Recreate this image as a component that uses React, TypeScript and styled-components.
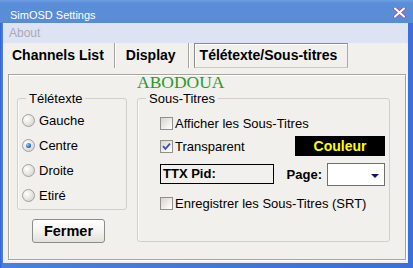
import React from "react";
import styled, { createGlobalStyle } from "styled-components";

const Global = createGlobalStyle`
  html, body { margin: 0; padding: 0; background: #fff; }
  body { font-family: "Liberation Sans", Arial, sans-serif; }
  * { box-sizing: border-box; }
`;

const Window = styled.div`
  width: 413px;
  height: 268px;
  display: flex;
  flex-direction: column;
  background: linear-gradient(90deg, #2f5fcf, #4a7ee0 2px, #3b6fd9);
`;

const TitleBar = styled.div`
  height: 23px;
  flex: none;
  display: flex;
  align-items: flex-end;
  justify-content: space-between;
  padding: 0 7px 1px 10px;
  background: linear-gradient(#6f9fe4, #5b8ed8 3px, #5a8cd6);
  color: #fff;
  font-size: 11px;
  line-height: 13px;
`;

const CloseIcon = styled.svg`
  width: 13px;
  height: 11px;
  margin-bottom: 4px;
`;

const Client = styled.div`
  flex: 1;
  margin: 0 5px 5px 3px;
  display: flex;
  flex-direction: column;
  background: #f1f0ec;
`;

const MenuBar = styled.div`
  height: 20px;
  flex: none;
  display: flex;
  align-items: center;
  padding-left: 6px;
  background: #dee3f4;
  color: #a9a9b8;
  font-size: 12px;
  line-height: 14px;
`;

const TabRow = styled.div`
  height: 25px;
  flex: none;
  display: flex;
  align-items: stretch;
  padding-left: 9px;
`;

const Tab = styled.div<{ $active?: boolean; $pl: number; $pr: number }>`
  font-size: 14px;
  font-weight: bold;
  color: #000;
  white-space: nowrap;
  padding: 0 ${(p) => p.$pr}px 0 ${(p) => p.$pl}px;
  line-height: ${(p) => (p.$active ? 23 : 25)}px;
  ${(p) =>
    p.$active &&
    `
    margin-left: 4px;
    border: 1px solid;
    border-color: #8a8a8a #a9a9a9 #c9c8c2 #8a8a8a;
    box-shadow: inset 1px 1px 0 #fff;
  `}
`;

const TabSep = styled.div`
  width: 2px;
  border-left: 1px solid #a4a3a0;
  border-right: 1px solid #fff;
`;

const Frame = styled.div`
  flex: 1;
  margin: 6px 2px 3px 5px;
  border: 1px solid #a6a5a0;
  box-shadow: 1px 1px 0 #fff, inset 1px 1px 0 #fff;
  display: flex;
  flex-direction: column;
`;

const Banner = styled.div`
  padding-left: 128px;
  font-family: "Liberation Serif", "Times New Roman", serif;
  font-size: 17.5px;
  line-height: 14px;
  height: 14px;
  color: #2b9a2b;
`;

const Panels = styled.div`
  display: flex;
  gap: 10px;
  padding-left: 8px;
  margin-top: 2px;
  align-items: flex-start;
`;

const LeftCol = styled.div`
  width: 110px;
  display: flex;
  flex-direction: column;
  align-items: flex-start;
`;

const GroupBox = styled.fieldset<{ $w: number; $h?: number }>`
  margin: 0;
  padding: 0;
  min-width: 0;
  width: ${(p) => p.$w}px;
  ${(p) => (p.$h ? `height: ${p.$h}px;` : "")}
  border: 1px solid #d0cfc8;
  border-radius: 3px;
  box-shadow: inset 1px 0 0 #fbfbf9;
`;

const Legend = styled.legend`
  margin-left: 8px;
  padding: 0 3px;
  font-size: 13px;
  line-height: 15px;
  color: #000;
`;

const GroupBody = styled.div<{ $pad: string }>`
  padding: ${(p) => p.$pad};
  display: flex;
  flex-direction: column;
`;

const RadioRow = styled.div`
  height: 25px;
  display: flex;
  align-items: center;
  gap: 4px;
  font-size: 13px;
  color: #000;
`;

const RadioCircle = styled.span<{ $on?: boolean }>`
  width: 13px;
  height: 13px;
  border-radius: 50%;
  border: 1px solid #a2a29c;
  background: radial-gradient(circle at 35% 35%, #ffffff, #dcdcd6 70%, #c8c8c2);
  display: flex;
  align-items: center;
  justify-content: center;
  flex: none;
  &::after {
    content: "";
    display: ${(p) => (p.$on ? "block" : "none")};
    width: 5px;
    height: 5px;
    border-radius: 50%;
    background: radial-gradient(circle at 35% 35%, #8fd0ff, #1c6fc2 60%, #0b4a90);
  }
`;

const CheckRow = styled.div<{ $mt?: number }>`
  height: 24px;
  margin-top: ${(p) => p.$mt ?? 0}px;
  display: flex;
  align-items: center;
  gap: 2px;
  font-size: 13px;
  color: #000;
`;

const CheckBox = styled.span`
  width: 13px;
  height: 13px;
  flex: none;
  border: 1px solid #8f908c;
  background: linear-gradient(135deg, #d6d6cf, #f4f4f0 70%, #ffffff);
  display: flex;
  align-items: center;
  justify-content: center;
`;

const ColorRow = styled.div`
  height: 20px;
  margin-top: 1px;
  display: flex;
  align-items: center;
  justify-content: space-between;
`;

const CheckInline = styled.div`
  display: flex;
  align-items: center;
  gap: 2px;
  font-size: 13px;
  color: #000;
`;

const ColorButton = styled.div`
  width: 90px;
  height: 20px;
  background: #000;
  color: #ffff00;
  font-size: 14px;
  font-weight: bold;
  display: flex;
  align-items: center;
  justify-content: center;
`;

const PidRow = styled.div`
  height: 24px;
  margin-top: 6px;
  display: flex;
  align-items: center;
`;

const PidBox = styled.div`
  width: 114px;
  height: 20px;
  border: 1px solid #000;
  padding-left: 2px;
  font-size: 13px;
  font-weight: bold;
  line-height: 18px;
  color: #000;
`;

const BoldLabel = styled.span`
  margin-left: auto;
  font-size: 13px;
  font-weight: bold;
  color: #000;
`;

const Dropdown = styled.div`
  width: 58px;
  height: 23px;
  margin-left: 5px;
  background: #fff;
  border: 1px solid #6f6f6f;
  display: flex;
  justify-content: flex-end;
  align-items: center;
  padding: 3px 5px 0 0;
`;

const Arrow = styled.span`
  width: 0;
  height: 0;
  border-left: 4px solid transparent;
  border-right: 4px solid transparent;
  border-top: 4px solid #10107a;
`;

const Button = styled.div`
  margin: 9px 0 0 15px;
  width: 73px;
  height: 24px;
  border: 1px solid #8c8c88;
  border-radius: 3px;
  background: linear-gradient(#ffffff, #f4f4f0 50%, #e2e1da);
  display: flex;
  align-items: center;
  justify-content: center;
  font-size: 14.5px;
  font-weight: bold;
  color: #000;
`;

const Check = ({ checked }: { checked?: boolean }) => (
  <CheckBox>
    {checked && (
      <svg width="9" height="9" viewBox="0 0 9 9">
        <path d="M1 4.2 L3.4 6.8 L8 1.6" fill="none" stroke="#3b4fb8" strokeWidth="1.8" />
      </svg>
    )}
  </CheckBox>
);

export default function App() {
  return (
    <>
      <Global />
      <Window>
        <TitleBar>
          <span>SimOSD Settings</span>
          <CloseIcon viewBox="0 0 13 11">
            <path d="M2 1.5 L11 9.5 M11 1.5 L2 9.5" stroke="#c040b0" strokeWidth="3.6" strokeLinecap="round" />
            <path d="M2 1.5 L11 9.5 M11 1.5 L2 9.5" stroke="#ffffff" strokeWidth="2" strokeLinecap="round" />
          </CloseIcon>
        </TitleBar>
        <Client>
          <MenuBar>About</MenuBar>
          <TabRow>
            <Tab $pl={0} $pr={10}>Channels List</Tab>
            <TabSep />
            <Tab $pl={10} $pr={12}>Display</Tab>
            <TabSep />
            <Tab $active $pl={5} $pr={10}>Télétexte/Sous-titres</Tab>
          </TabRow>
          <Frame>
            <Banner>ABODOUA</Banner>
            <Panels>
              <LeftCol>
                <GroupBox $w={110}>
                  <Legend>Télétexte</Legend>
                  <GroupBody $pad="2px 0 1px 4px">
                    <RadioRow><RadioCircle />Gauche</RadioRow>
                    <RadioRow><RadioCircle $on />Centre</RadioRow>
                    <RadioRow><RadioCircle />Droite</RadioRow>
                    <RadioRow><RadioCircle />Etiré</RadioRow>
                  </GroupBody>
                </GroupBox>
                <Button>Fermer</Button>
              </LeftCol>
              <GroupBox $w={253} $h={151}>
                <Legend>Sous-Titres</Legend>
                <GroupBody $pad="5px 4px 0 22px">
                  <CheckRow>
                    <Check />
                    Afficher les Sous-Titres
                  </CheckRow>
                  <ColorRow>
                    <CheckInline>
                      <Check checked />
                      Transparent
                    </CheckInline>
                    <ColorButton>Couleur</ColorButton>
                  </ColorRow>
                  <PidRow>
                    <PidBox>TTX Pid:</PidBox>
                    <BoldLabel>Page:</BoldLabel>
                    <Dropdown>
                      <Arrow />
                    </Dropdown>
                  </PidRow>
                  <CheckRow $mt={5}>
                    <Check />
                    Enregistrer les Sous-Titres (SRT)
                  </CheckRow>
                </GroupBody>
              </GroupBox>
            </Panels>
          </Frame>
        </Client>
      </Window>
    </>
  );
}
